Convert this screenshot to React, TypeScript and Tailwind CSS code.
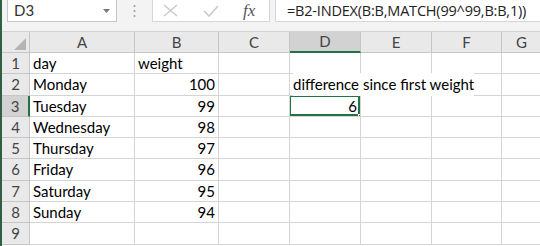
const cols = [
  { name: 'A', w: 'w-[105px]' },
  { name: 'B', w: 'w-[84px]' },
  { name: 'C', w: 'w-[71px]' },
  { name: 'D', w: 'w-[71px]' },
  { name: 'E', w: 'w-[71px]' },
  { name: 'F', w: 'w-[70px]' },
  { name: 'G', w: 'w-[40px]' },
]

const rowHeights = ['h-[21px]', 'h-[22px]', 'h-[21px]', 'h-[21px]', 'h-[21px]', 'h-[22px]', 'h-[21px]', 'h-[21px]', 'h-[22px]']

const data: Record<number, { a?: string; b?: string; d?: string }> = {
  1: { a: 'day', b: 'weight' },
  2: { a: 'Monday', b: '100', d: 'difference since first weight' },
  3: { a: 'Tuesday', b: '99', d: '6' },
  4: { a: 'Wednesday', b: '98' },
  5: { a: 'Thursday', b: '97' },
  6: { a: 'Friday', b: '96' },
  7: { a: 'Saturday', b: '95' },
  8: { a: 'Sunday', b: '94' },
  9: {},
}

const font = { fontFamily: 'Lato, "Liberation Sans", sans-serif' }

const FormulaBar = () => (
  <div className="h-[31px] flex items-start bg-[#f3f3f3]">
    <div className="ml-[5px] w-[110px] h-[22px] bg-white border border-t-0 border-[#c6c6c6] flex items-center justify-between pl-[6px] pr-[6px] text-[15px] text-[#333]">
      <span>D3</span>
      <svg width="7" height="4" viewBox="0 0 7 4">
        <path d="M0 0 L7 0 L3.5 4 Z" fill="#777" />
      </svg>
    </div>
    <div className="w-[35px] h-[22px] flex items-center justify-center">
      <svg width="3" height="14" viewBox="0 0 3 14">
        <circle cx="1.5" cy="2" r="1" fill="#9a9a9a" />
        <circle cx="1.5" cy="7" r="1" fill="#9a9a9a" />
        <circle cx="1.5" cy="12" r="1" fill="#9a9a9a" />
      </svg>
    </div>
    <div className="w-[118px] h-[22px] bg-white border border-t-0 border-[#d6d6d6] flex items-center">
      <svg className="ml-[10px]" width="15" height="13" viewBox="0 0 15 13">
        <path d="M1 1 L14 12 M14 1 L1 12" stroke="#c8c8c8" strokeWidth="1.3" fill="none" />
      </svg>
      <svg className="ml-[25px]" width="16" height="12" viewBox="0 0 16 12">
        <path d="M1 6 L6 11 L15 1" stroke="#c8c8c8" strokeWidth="1.5" fill="none" />
      </svg>
      <span
        className="ml-[24px] italic text-[17px] text-[#555] leading-none"
        style={{ fontFamily: '"Liberation Serif", serif' }}
      >
        fx
      </span>
    </div>
    <div className="ml-[5px] flex-1 h-[22px] bg-white border border-t-0 border-r-0 border-[#d6d6d6] flex items-center pl-[11px] text-[14.5px] text-[#222]" style={{ fontFamily: '"Open Sans", sans-serif', letterSpacing: '-0.2px' }}>
      =B2-INDEX(B:B,MATCH(99^99,B:B,1))
    </div>
  </div>
)

const HeaderRow = () => (
  <div className="flex h-[22px] bg-[#e9e9e9] border-t border-[#d4d4d4]">
    <div className="w-[28px] shrink-0 border-r border-b border-[#c6c6c6] flex items-end justify-end pr-[3px] pb-[2px]">
      <svg width="12" height="12" viewBox="0 0 12 12">
        <path d="M12 0 L12 12 L0 12 Z" fill="#b4b4b4" />
      </svg>
    </div>
    {cols.map((c) => (
      <div
        key={c.name}
        className={`${c.w} shrink-0 flex items-center justify-center text-[15px] ${
          c.name === 'D'
            ? 'bg-[#d2d2d2] border-b-2 border-b-[#217346] border-r border-r-[#c6c6c6] text-[#444]'
            : 'border-r border-b border-[#c6c6c6] text-[#444]'
        }`}
      >
        {c.name}
      </div>
    ))}
  </div>
)

export default function App() {
  return (
    <div className="w-[540px] h-[246px] overflow-hidden flex bg-white" style={font}>
      <div className="w-[2px] shrink-0 bg-[#2f5f45]" />
      <div className="flex-1 flex flex-col min-w-0">
        <FormulaBar />
        <HeaderRow />
        {rowHeights.map((h, i) => {
          const r = i + 1
          const row = data[r]
          const selected = r === 3
          return (
            <div key={r} className={`flex ${h} shrink-0`}>
              <div
                className={`w-[28px] shrink-0 flex items-center justify-center text-[15px] text-[#444] border-b ${
                  selected
                    ? 'bg-[#d2d2d2] border-r-2 border-r-[#217346] border-b-[#c6c6c6]'
                    : 'bg-[#e9e9e9] border-r border-[#c6c6c6]'
                }`}
              >
                {r}
              </div>
              {cols.map((c) => {
                let text: string | undefined
                let right = false
                if (c.name === 'A') text = row.a
                if (c.name === 'B') {
                  text = row.b
                  right = r > 1
                }
                if (c.name === 'D') {
                  text = row.d
                  right = r === 3
                }
                const isSel = selected && c.name === 'D'
                return (
                  <div
                    key={c.name}
                    className={`${c.w} shrink-0 relative border-r border-b border-[#d4d4d4] flex items-center text-[15px] text-black whitespace-nowrap ${
                      right ? 'justify-end pr-[3px]' : 'pl-[3px]'
                    } ${c.name === 'D' && !right ? 'overflow-visible z-10' : 'overflow-hidden'}`}
                  >
                    <span className={c.name === 'D' && !right && text ? 'bg-white' : ''}>{text}</span>
                    {isSel && (
                      <>
                        <div className="absolute -left-[1px] -top-[1px] -right-[0px] -bottom-[0px] border-2 border-[#217346]" />
                        <div className="absolute -right-[3px] -bottom-[3px] w-[5px] h-[5px] bg-[#217346] border border-white" />
                      </>
                    )}
                  </div>
                )
              })}
            </div>
          )
        })}
      </div>
    </div>
  )
}
